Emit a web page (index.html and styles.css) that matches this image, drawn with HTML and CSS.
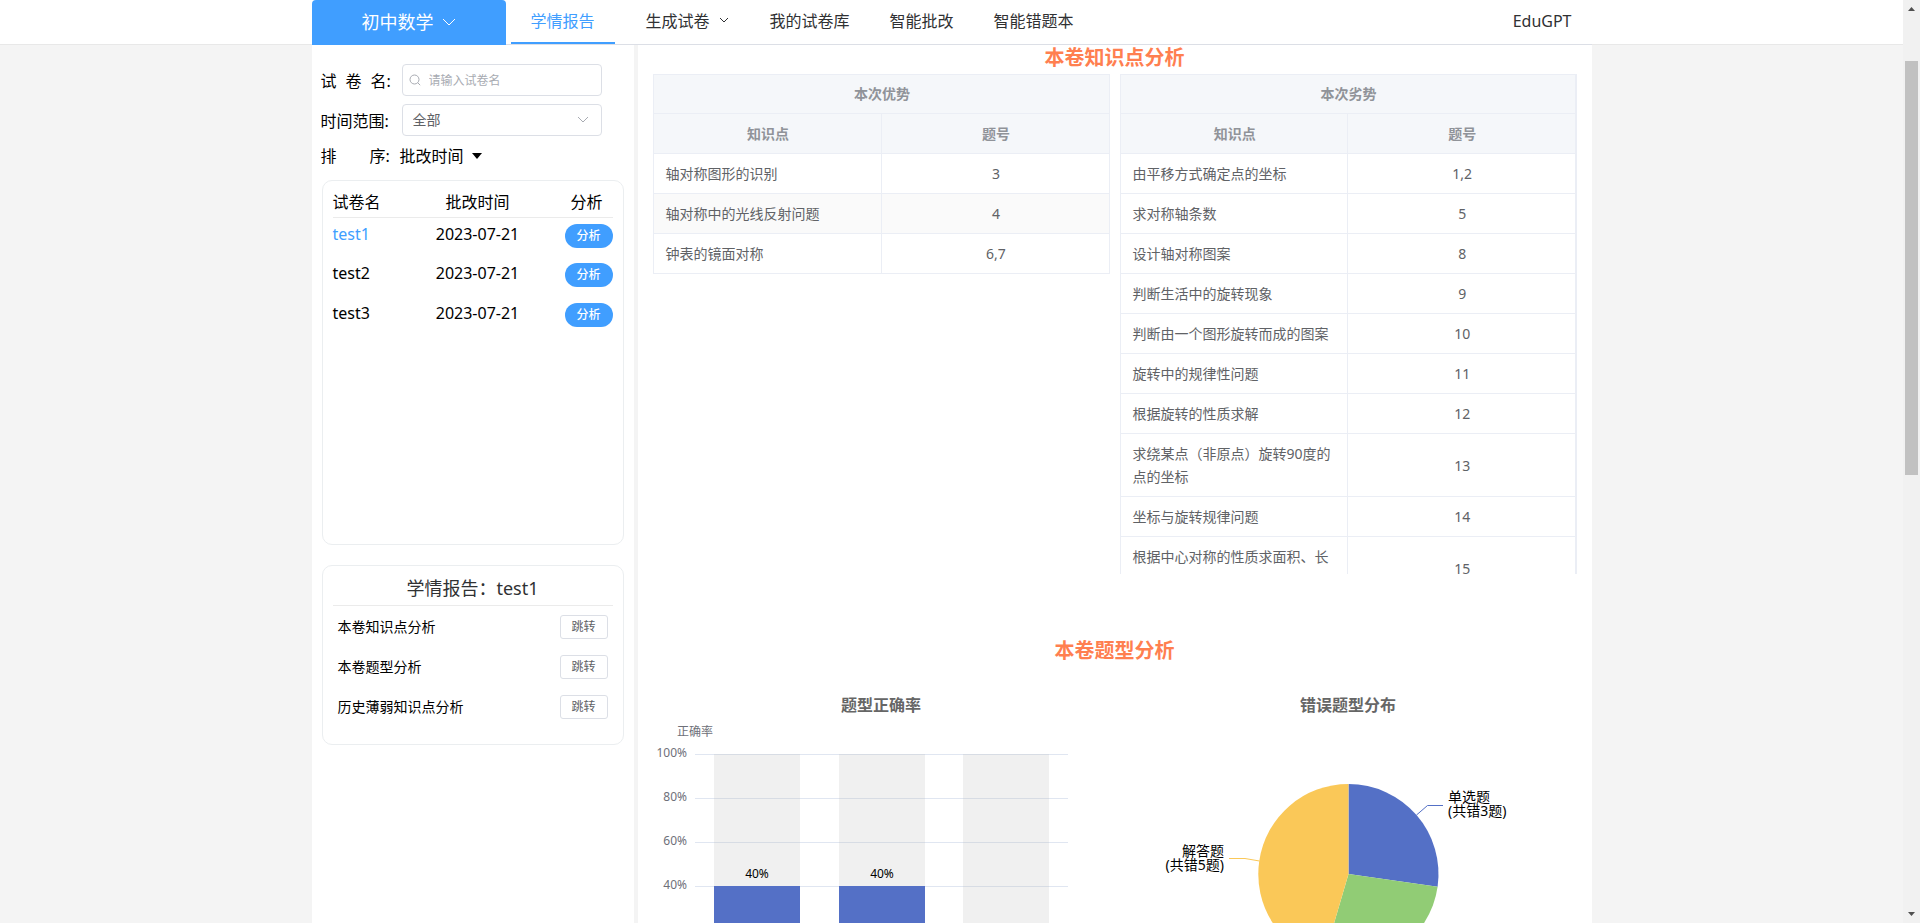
FILE: index.html
```html
<!DOCTYPE html>
<html lang="zh-CN">
<head>
<meta charset="utf-8">
<meta name="viewport" content="width=device-width, initial-scale=1">
<title>EduGPT</title>
<link rel="stylesheet" href="styles.css">
</head>
<body>
<div class="window">
  <div class="page">
    <header class="topbar">
      <nav class="container nav">
        <button class="subject" type="button">初中数学
          <svg class="subject-arrow" viewBox="0 0 14 8" fill="none" stroke="currentColor"><path d="M1 1l6 6 6-6"/></svg>
        </button>
        <a class="nav-link active" href="#">学情报告</a>
        <a class="nav-link has-menu" href="#">生成试卷
          <svg class="nav-arrow" viewBox="0 0 12 12" fill="none" stroke="currentColor"><path d="M2 3l4 4 4-4"/></svg>
        </a>
        <a class="nav-link" href="#">我的试卷库</a>
        <a class="nav-link" href="#">智能批改</a>
        <a class="nav-link" href="#">智能错题本</a>
        <a class="nav-link user" href="#">EduGPT</a>
      </nav>
    </header>

    <div class="container columns">
      <aside class="sidebar">
        <form class="filters">
          <div class="field">
            <label class="label spread" for="paper"><span>试</span><span>卷</span><span>名:</span></label>
            <div class="control">
              <svg class="search-icon" viewBox="0 0 12 12" fill="none" stroke="currentColor"><circle cx="5.5" cy="5.5" r="4.5"/><path d="M8.8 8.8l2.4 2.4"/></svg>
              <input class="text-input" id="paper" type="text" placeholder="请输入试卷名">
            </div>
          </div>
          <div class="field">
            <label class="label" for="range">时间范围:</label>
            <div class="control">
              <select class="select" id="range"><option>全部</option></select>
              <svg class="select-arrow" viewBox="0 0 12 8" fill="none" stroke="currentColor"><path d="M1 1l5 5 5-5"/></svg>
            </div>
          </div>
          <div class="field sort-field">
            <label class="label sort-label" for="sort"><span>排</span><span>序:</span></label>
            <button class="sort" id="sort" type="button">批改时间
              <svg class="caret" viewBox="0 0 10 6" fill="currentColor"><path d="M0 0h10L5 6z"/></svg>
            </button>
          </div>
        </form>

        <section class="card papers">
          <table class="paper-table">
            <thead><tr><th class="name">试卷名</th><th class="date">批改时间</th><th class="action">分析</th></tr></thead>
            <tbody>
              <tr><td class="name current">test1</td><td class="date">2023-07-21</td><td class="action"><button class="pill" type="button">分析</button></td></tr>
              <tr><td class="name">test2</td><td class="date">2023-07-21</td><td class="action"><button class="pill" type="button">分析</button></td></tr>
              <tr><td class="name">test3</td><td class="date">2023-07-21</td><td class="action"><button class="pill" type="button">分析</button></td></tr>
            </tbody>
          </table>
        </section>

        <section class="card outline">
          <h2 class="outline-title">学情报告：test1</h2>
          <ul class="outline-list">
            <li class="outline-item">本卷知识点分析<button class="jump" type="button">跳转</button></li>
            <li class="outline-item">本卷题型分析<button class="jump" type="button">跳转</button></li>
            <li class="outline-item">历史薄弱知识点分析<button class="jump" type="button">跳转</button></li>
          </ul>
        </section>
      </aside>

      <main class="report">
        <h2 class="heading">本卷知识点分析</h2>
        <div class="halves tables">
          <div>
            <table class="grid-table">
              <thead>
                <tr><th colspan="2">本次优势</th></tr>
                <tr><th>知识点</th><th>题号</th></tr>
              </thead>
              <tbody>
                <tr><td>轴对称图形的识别</td><td class="num">3</td></tr>
                <tr class="striped"><td>轴对称中的光线反射问题</td><td class="num">4</td></tr>
                <tr><td>钟表的镜面对称</td><td class="num">6,7</td></tr>
              </tbody>
            </table>
          </div>
          <div class="clipped">
            <table class="grid-table">
              <thead>
                <tr><th colspan="2">本次劣势</th></tr>
                <tr><th>知识点</th><th>题号</th></tr>
              </thead>
              <tbody>
                <tr><td>由平移方式确定点的坐标</td><td class="num">1,2</td></tr>
                <tr><td>求对称轴条数</td><td class="num">5</td></tr>
                <tr><td>设计轴对称图案</td><td class="num">8</td></tr>
                <tr><td>判断生活中的旋转现象</td><td class="num">9</td></tr>
                <tr><td>判断由一个图形旋转而成的图案</td><td class="num">10</td></tr>
                <tr><td>旋转中的规律性问题</td><td class="num">11</td></tr>
                <tr><td>根据旋转的性质求解</td><td class="num">12</td></tr>
                <tr><td>求绕某点（非原点）旋转90度的点的坐标</td><td class="num">13</td></tr>
                <tr><td>坐标与旋转规律问题</td><td class="num">14</td></tr>
                <tr><td>根据中心对称的性质求面积、长<br>&nbsp;</td><td class="num">15</td></tr>
              </tbody>
            </table>
          </div>
        </div>

        <h2 class="heading">本卷题型分析</h2>
        <div class="halves charts">
          <figure class="figure">
            <figcaption class="chart-title">题型正确率</figcaption>
            <svg class="chart" viewBox="0 0 457 270">
              <g class="grid-lines"><path d="M42 34.5h373M42 78.5h373M42 122.5h373M42 166.5h373M42 210.5h373M42 254.5h373"/></g>
              <g class="bar-back"><rect x="61" y="34" width="86" height="220"/><rect x="186" y="34" width="86" height="220"/><rect x="310" y="34" width="86" height="220"/></g>
              <g class="bar"><rect x="61" y="166" width="86" height="88"/><rect x="186" y="166" width="86" height="88"/></g>
              <g class="axis-text">
                <text x="42" y="16" text-anchor="middle">正确率</text>
                <text x="34" y="37" text-anchor="end">100%</text>
                <text x="34" y="81" text-anchor="end">80%</text>
                <text x="34" y="125" text-anchor="end">60%</text>
                <text x="34" y="169" text-anchor="end">40%</text>
              </g>
              <g class="value-text">
                <text x="104" y="158" text-anchor="middle">40%</text>
                <text x="229" y="158" text-anchor="middle">40%</text>
              </g>
            </svg>
          </figure>
          <figure class="figure">
            <figcaption class="chart-title">错误题型分布</figcaption>
            <svg class="chart" viewBox="0 0 457 270">
              <path fill="#5470c6" d="M228.5 154V64A90 90 0 0 1 317.6 166.8z"/>
              <path fill="#91cc75" d="M228.5 154L317.6 166.8A90 90 0 0 1 203.1 240.4z"/>
              <path fill="#fac858" d="M228.5 154L203.1 240.4A90 90 0 0 1 228.5 64z"/>
              <path fill="none" stroke="#5470c6" d="M296.5 95L307.5 85.5H323"/>
              <path fill="none" stroke="#fac858" d="M139.5 141L125 138.5H109"/>
              <g class="pie-text">
                <text x="328" y="82">单选题</text>
                <text x="328" y="96">(共错3题)</text>
                <text x="104" y="136" text-anchor="end">解答题</text>
                <text x="104" y="150" text-anchor="end">(共错5题)</text>
              </g>
            </svg>
          </figure>
        </div>
      </main>
    </div>
  </div>

  <div class="scrollbar" aria-hidden="true">
    <svg class="scroll-arrow" viewBox="0 0 17 17"><path d="M5 11h7L8.500 7z"/></svg>
    <div class="track"><div class="thumb"></div></div>
    <svg class="scroll-arrow" viewBox="0 0 17 17"><path d="M5 6h7L8.500 10z"/></svg>
  </div>
</div>
</body>
</html>
```
FILE: styles.css
```css
* { box-sizing: border-box; }

body {
  margin: 0;
  font-family: "Noto Sans", "Noto Sans CJK SC", sans-serif;
  font-size: 16px;
  line-height: 24px;
  color: #000;
  background: #f4f4f4;
}

button, input, select { font: inherit; color: inherit; margin: 0; }
button { cursor: pointer; }
h2, ul, figure { margin: 0; padding: 0; }

.window {
  display: grid;
  grid-template-columns: minmax(0, 1fr) 17px;
  height: 100vh;
  overflow: hidden;
}

.page {
  display: flex;
  flex-direction: column;
  min-height: 0;
  overflow: hidden;
}

.container {
  width: 100%;
  max-width: 1280px;
  margin: 0 auto;
}

/* Top bar */
.topbar {
  flex: none;
  background: #fff;
  box-shadow: inset 0 -1px #e8e8e8;
}
.nav {
  display: flex;
  height: 45px;
  border-bottom: 1px solid #dcdfe6;
}
.subject {
  display: flex;
  align-items: center;
  justify-content: center;
  gap: 8px;
  width: 194px;
  height: 45px;
  margin-right: 5px;
  padding: 0 0 2px;
  border: 0;
  border-radius: 4px 4px 0 0;
  background: #409eff;
  color: #fff;
  font-size: 18px;
}
.subject-arrow { width: 14px; height: 8px; }
.nav-link {
  display: flex;
  align-items: center;
  height: 44px;
  padding: 0 20px;
  padding-bottom: 2px;
  color: #303133;
  text-decoration: none;
}
.nav-link.active {
  padding-bottom: 0;
  margin-right: 11px;
  border-bottom: 2px solid #409eff;
  color: #409eff;
}
.has-menu { gap: 8px; }
.nav-arrow { width: 12px; height: 12px; }
.user { margin-left: auto; }

/* Columns */
.columns {
  flex: 1;
  display: grid;
  grid-template-columns: 322px minmax(0, 1fr);
  gap: 4px;
  min-height: 0;
}
.sidebar, .report { background: #fff; }
.sidebar { padding: 19px 10px 0; }

/* Filters */
.filters {
  display: flex;
  flex-direction: column;
  gap: 8px;
  margin-left: -1px;
}
.field { display: flex; align-items: center; height: 32px; }
.label { flex: none; width: 81px; padding-top: 1px; white-space: nowrap; }
.spread { display: flex; gap: 9px; }
.sort-field { height: 24px; }
.sort-label { display: flex; gap: 33px; width: 79px; padding: 0; }
.control { position: relative; width: 200px; }
.text-input, .select {
  display: block;
  width: 100%;
  height: 32px;
  border: 1px solid #dcdfe6;
  border-radius: 4px;
  background: #fff;
  outline: none;
}
.text-input { padding: 0 10px 0 26px; font-size: 12px; }
.text-input::placeholder { color: #a8abb2; opacity: 1; }
.select { appearance: none; padding: 0 30px 0 10px; font-size: 14px; color: #606266; }
.search-icon {
  position: absolute;
  left: 7px;
  top: 10px;
  width: 12px;
  height: 12px;
  color: #a8abb2;
}
.select-arrow {
  position: absolute;
  right: 13px;
  top: 12px;
  width: 12px;
  height: 8px;
  color: #a8abb2;
  pointer-events: none;
}
.sort {
  display: flex;
  align-items: center;
  gap: 8px;
  padding: 0;
  border: 0;
  background: none;
}
.caret { width: 10px; height: 6px; }

/* Sidebar cards */
.card {
  padding: 10px;
  border: 1px solid #ebeef0;
  border-radius: 10px;
}
.papers { height: 365px; margin-top: 12px; padding-top: 8px; }
.paper-table { width: 100%; border-collapse: collapse; table-layout: fixed; }
.paper-table th {
  height: 28px;
  padding: 1px 0 2px;
  border-bottom: 1px solid #ebebeb;
  font-weight: 400;
}
.paper-table td { height: 40px; padding: 4px 0 0; vertical-align: top; }
.paper-table .name { width: 74px; text-align: left; }
.paper-table .date { text-align: center; }
.paper-table .action { width: 64px; text-align: right; }
.paper-table th.action { padding-right: 10px; }
.current { color: #409eff; }
.pill {
  display: block;
  width: 48px;
  height: 24px;
  margin: 2px 0 0 auto;
  padding: 0;
  border: 0;
  border-radius: 12px;
  background: #409eff;
  color: #fff;
  font-size: 12px;
  font-weight: 500;
}

.outline { height: 180px; margin-top: 20px; }
.outline-title {
  height: 30px;
  border-bottom: 1px solid #ebebeb;
  color: #303133;
  font-size: 18px;
  font-weight: 400;
  line-height: 24px;
  text-align: center;
}
.outline-list { padding-top: 1px; list-style: none; }
.outline-item {
  display: flex;
  align-items: center;
  justify-content: space-between;
  height: 40px;
  padding: 0 5px;
  font-size: 14px;
}
.jump {
  width: 48px;
  height: 24px;
  padding: 0;
  border: 1px solid #dcdfe6;
  border-radius: 3px;
  background: #fff;
  color: #606266;
  font-size: 12px;
  line-height: 22px;
}

/* Report */
.report { padding: 0 15px; overflow: hidden; }
.heading {
  padding-top: 1px;
  color: #ff7f50;
  font-size: 20px;
  font-weight: 700;
  line-height: 24px;
  text-align: center;
}
.halves {
  display: grid;
  grid-template-columns: repeat(2, minmax(0, 1fr));
  gap: 10px;
}
.tables { height: 500px; margin: 4px 0 64px; }
.clipped { height: 500px; overflow: hidden; border-right: 1px solid #ebeef5; }
.grid-table {
  width: 100%;
  border-top: 1px solid #ebeef5;
  border-left: 1px solid #ebeef5;
  border-spacing: 0;
  table-layout: fixed;
  color: #606266;
  font-size: 14px;
  line-height: 23px;
}
.grid-table th, .grid-table td {
  padding: 8px 8px 8px 12px;
  border-right: 1px solid #ebeef5;
  border-bottom: 1px solid #ebeef5;
}
.grid-table th { padding-left: 10px; background: #f5f7fa; color: #909399; font-weight: 700; }
.grid-table tr:first-child th { padding-top: 7px; }
.grid-table .num { padding-left: 10px; text-align: center; }
.striped td { background: #fafafa; }

/* Charts */
.charts { margin-top: 30px; }
.chart-title {
  color: #666;
  font-weight: 700;
  line-height: 24px;
  text-align: center;
}
.chart { display: block; width: 100%; margin-top: 3px; }
.grid-lines { fill: none; stroke: #e0e6f1; }
.bar-back { fill: rgba(180, 180, 180, 0.2); }
.bar { fill: #5470c6; }
.axis-text { fill: #6e7079; font-size: 12px; }
.value-text { fill: #000; font-size: 12px; }
.pie-text { fill: #000; font-size: 14px; }

/* Scrollbar */
.scrollbar { display: flex; flex-direction: column; background: #f1f1f1; }
.scroll-arrow { flex: none; width: 17px; height: 17px; fill: #505050; }
.track { flex: 1; padding: 44px 2px 0; }
.thumb { height: 49%; background: #c1c1c1; }
```
